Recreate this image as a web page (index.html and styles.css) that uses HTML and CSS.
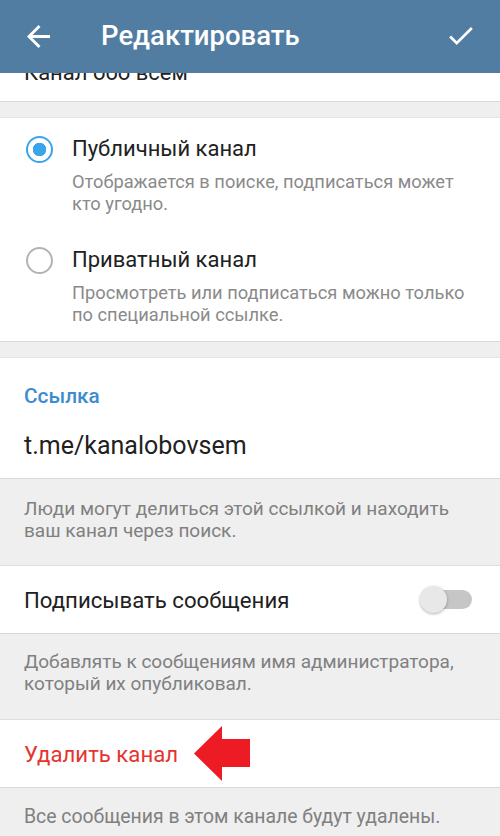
FILE: index.html
```html
<!DOCTYPE html>
<html lang="ru">
<head>
    <meta charset="UTF-8">
    <meta name="viewport" content="width=device-width, initial-scale=1.0">
    <title>Редактировать</title>
    <link rel="stylesheet" href="styles.css">
</head>
<body>
    <div class="app">
        <div class="toolbar">
            <svg class="back" viewBox="4 4 16 16" width="23" height="23">
                <path d="M20 11H7.83l5.59-5.59L12 4l-8 8 8 8 1.41-1.41L7.83 13H20v-2z" fill="#fff"/>
            </svg>
            <div class="title">Редактировать</div>
            <svg class="done" viewBox="3.41 5.59 17.59 13.41" width="24" height="18">
                <path d="M9 16.17L4.83 12l-1.42 1.41L9 19 21 7l-1.41-1.41z" fill="#fff"/>
            </svg>
        </div>

        <div class="section cut">
            <div class="cut-text">Канал обо всем</div>
        </div>
        <div class="gap"></div>

        <div class="section options">
            <div class="option">
                <span class="radio checked"></span>
                <div class="option-body">
                    <div class="option-title">Публичный канал</div>
                    <div class="option-desc">Отображается в поиске, подписаться может кто угодно.</div>
                </div>
            </div>
            <div class="option">
                <span class="radio"></span>
                <div class="option-body">
                    <div class="option-title">Приватный канал</div>
                    <div class="option-desc">Просмотреть или подписаться можно только по специальной ссылке.</div>
                </div>
            </div>
        </div>
        <div class="gap"></div>

        <div class="section link-box">
            <div class="link-label">Ссылка</div>
            <div class="link-value">t.me/kanalobovsem</div>
        </div>
        <div class="hint">Люди могут делиться этой ссылкой и находить ваш канал через поиск.</div>

        <div class="section row">
            <span>Подписывать сообщения</span>
            <span class="switch"><span class="knob"></span></span>
        </div>
        <div class="hint hint-2">Добавлять к сообщениям имя администратора, который их опубликовал.</div>

        <div class="section row delete">
            <span>Удалить канал</span>
            <svg class="pointer" viewBox="0 0 56 55" width="56" height="55">
                <polygon points="0,27.5 28,0 28,13 56,13 56,41 28,41 28,55" fill="#ed1c24"/>
            </svg>
        </div>
        <div class="hint last">Все сообщения в этом канале будут удалены.</div>
    </div>
</body>
</html>
```

FILE: styles.css
```css
body {
    margin: 0;
    font-family: Roboto, "Noto Sans", sans-serif;
    background-color: #efefef;
    color: #212121;
}
.app {
    width: 500px;
    height: 836px;
    overflow: hidden;
}
.toolbar {
    height: 73px;
    background-color: #527da3;
    display: flex;
    align-items: center;
    padding: 0 27px;
    color: #fff;
}
.toolbar .back {
    margin-top: -1px;
}
.toolbar .title {
    flex: 1;
    margin-left: 51px;
    margin-top: -2px;
    font-size: 27.5px;
    font-weight: 500;
}
.toolbar .done {
    margin-top: -1px;
}
.section {
    background-color: #fff;
    border-bottom: 1px solid #d9d9d9;
}
.gap {
    height: 15px;
    border-bottom: 1px solid #e4e4e4;
}
.cut {
    height: 28px;
    overflow: hidden;
}
.cut-text {
    margin-top: -12px;
    padding-left: 24px;
    font-size: 22px;
    line-height: 24px;
}
.options {
    padding: 19px 0 15px;
}
.option {
    display: flex;
    padding-left: 26px;
}
.option + .option {
    margin-top: 33px;
}
.radio {
    width: 27px;
    height: 27px;
    box-sizing: border-box;
    border: 2.5px solid #b3b3b3;
    border-radius: 50%;
    margin-top: -1px;
    flex-shrink: 0;
}
.radio.checked {
    border-color: #3ba5ec;
    background: radial-gradient(circle, #3ba5ec 6.5px, transparent 7px);
}
.option-body {
    margin-left: 19px;
    padding-right: 20px;
}
.option-title {
    font-size: 22px;
    line-height: 24px;
}
.option-desc {
    margin-top: 10px;
    font-size: 18.3px;
    line-height: 22px;
    color: #8a8a8a;
}
.link-box {
    padding: 27px 24px 18px;
}
.link-label {
    font-size: 20.8px;
    line-height: 22px;
    font-weight: 500;
    color: #3d8ccf;
}
.link-value {
    margin-top: 25px;
    font-size: 25px;
    line-height: 28px;
}
.hint {
    padding: 19px 20px 23px 24px;
    font-size: 19px;
    line-height: 22px;
    color: #808080;
    border-bottom: 1px solid #dedede;
}
.hint-2 {
    padding-top: 17px;
    padding-bottom: 24px;
}
.hint.last {
    border-bottom: none;
    padding-top: 18px;
    font-size: 19.4px;
}
.row {
    height: 67px;
    display: flex;
    align-items: center;
    justify-content: space-between;
    padding: 0 28px 0 24px;
    font-size: 22.2px;
}
.switch {
    width: 46px;
    height: 19px;
    border-radius: 10px;
    background-color: #c6c6c6;
    display: flex;
    align-items: center;
}
.knob {
    width: 27px;
    height: 27px;
    border-radius: 50%;
    margin-left: -6px;
    background-color: #e8e8e8;
    box-shadow: 0 1px 3px rgba(0, 0, 0, 0.3);
}
.delete {
    justify-content: flex-start;
    color: #e5342f;
}
.pointer {
    margin-left: 16px;
}
```
